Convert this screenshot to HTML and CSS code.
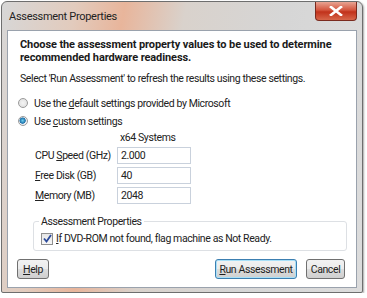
FILE: index.html
```html
<!DOCTYPE html>
<html lang="en">
<head>
    <meta charset="UTF-8">
    <meta name="viewport" content="width=device-width, initial-scale=1.0">
    <title>Assessment Properties</title>
    <link rel="stylesheet" href="styles.css">
</head>
<body>
    <div class="window">
        <div class="titlebar">
            <span class="title">Assessment Properties</span>
            <button class="close-btn">
                <svg width="14" height="10" viewBox="0 0 14 10">
                    <path d="M2 1 L12 9 M12 1 L2 9" stroke="#fff" stroke-width="2.6" stroke-linecap="square"/>
                </svg>
            </button>
        </div>
        <div class="client">
            <div class="heading">Choose the assessment property values to be used to determine recommended hardware readiness.</div>
            <div class="hint">Select 'Run Assessment' to refresh the results using these settings.</div>

            <!-- radio options -->
            <label class="option first"><span class="radio"></span><span>Use the <u>d</u>efault settings provided by Microsoft</span></label>
            <label class="option"><span class="radio checked"></span><span>Use <u>c</u>ustom settings</span></label>

            <div class="settings">
                <div class="col-head">x64 Systems</div>
                <div class="row"><span class="lbl">CPU <u>S</u>peed (GHz)</span><span class="field">2.000</span></div>
                <div class="row"><span class="lbl"><u>F</u>ree Disk (GB)</span><span class="field">40</span></div>
                <div class="row"><span class="lbl"><u>M</u>emory (MB)</span><span class="field">2048</span></div>
            </div>

            <div class="group">
                <div class="legend">Assessment Properties</div>
                <label class="check-row">
                    <span class="check">
                        <svg width="9" height="9" viewBox="0 0 9 9">
                            <path d="M1 4.5 L3.5 7.5 L8 1" fill="none" stroke="#2b4a9a" stroke-width="1.8"/>
                        </svg>
                    </span>
                    <span><u>I</u>f DVD-ROM not found, flag machine as Not Ready.</span>
                </label>
            </div>

            <div class="buttons">
                <button class="btn help"><u>H</u>elp</button>
                <span class="spacer"></span>
                <button class="btn run"><u>R</u>un Assessment</button>
                <button class="btn cancel">Cancel</button>
            </div>
        </div>
    </div>
</body>
</html>
```

FILE: styles.css
```css
body { margin: 0; background: #fff; font-family: Roboto, "Open Sans", sans-serif; font-size: 10.5px; letter-spacing: -0.4px; color: #222; }
u { text-decoration: underline; text-underline-offset: 1px; }

.window { width: 362px; height: 292px; margin: 1px 0 0 1px; border: 1px solid #6e6e6e; border-radius: 6px 6px 2px 2px; background: linear-gradient(100deg, #d7d7d7 0%, #e2cbbd 18%, #e8b59b 30%, #d9d2cc 45%, #d6d6d6 70%, #dcdcdc 100%); padding: 0 5px 4px 5px; box-sizing: border-box; box-shadow: 1px 1px 2px rgba(0,0,0,0.35); display: flex; flex-direction: column; }

.titlebar { height: 28px; flex: none; display: flex; align-items: flex-start; }
.title { margin: 8px 0 0 2px; font-size: 11px; letter-spacing: -0.3px; color: #222; }
.close-btn { margin: 0 0 0 auto; width: 42px; height: 19px; border: 1px solid #7a2a1e; border-top: none; border-radius: 0 0 4px 4px; background: linear-gradient(#e8a493 0%, #d4553e 45%, #c1321b 55%, #d7664a 100%); display: flex; align-items: center; justify-content: center; padding: 0; }

.client { flex: 1; background: #fff; border: 1px solid #9aa2ad; padding: 0 11px 0 12px; box-sizing: border-box; display: flex; flex-direction: column; }

.heading { font-weight: bold; font-size: 11px; line-height: 12.5px; margin-top: 8px; letter-spacing: -0.1px; color: #1a1a1a; }
.hint { margin-top: 8px; line-height: 14px; }

.option { display: flex; align-items: center; height: 18px; }
.option.first { margin-top: 8px; }
.radio { width: 10px; height: 10px; border-radius: 50%; border: 1px solid #9a9a9a; background: radial-gradient(circle, #f4f4f4 0%, #dcdcdc 100%); margin: 0 6px 0 -2px; box-sizing: border-box; }
.radio.checked { background: radial-gradient(circle at 45% 45%, #6fd0f0 0%, #1b6fa8 45%, #e9eef4 55%, #f4f4f4 100%); }

.settings { margin-left: 15px; }
.col-head { margin-left: 85px; line-height: 14px; margin-top: 1px; }
.row { display: flex; align-items: center; height: 20px; }
.row:first-of-type { margin-top: -1px; }
.lbl { width: 82px; }
.field { width: 74px; height: 17px; border: 1px solid #c9d1dc; box-sizing: border-box; padding-left: 3px; line-height: 15px; }

.group { margin: 16px 0 0 13px; width: 314px; height: 30px; flex: none; border: 1px solid #dde0e4; border-radius: 3px; position: relative; box-sizing: border-box; }
.legend { position: absolute; top: -7px; left: 5px; background: #fff; padding: 0 2px; line-height: 14px; }
.check-row { display: flex; align-items: center; margin: 10px 0 0 7px; }
.check { width: 12px; height: 12px; border: 1px solid #8f8f8f; box-sizing: border-box; background: linear-gradient(#e6e6e6, #f7f7f7); display: flex; align-items: center; justify-content: center; margin-right: 3px; }

.buttons { display: flex; align-items: center; margin-top: 8px; }
.spacer { flex: 1; }
.btn { font: inherit; letter-spacing: inherit; height: 20px; padding: 0; border: 1px solid #707070; border-radius: 3px; background: linear-gradient(#f2f2f2 0%, #ebebeb 50%, #dddddd 51%, #cfcfcf 100%); color: #1e1e1e; }
.btn.help { margin-left: -3px; width: 32px; }
.btn.run { width: 82px; border-color: #3c7fb1; box-shadow: inset 0 0 0 1px #a8e0f8; }
.btn.cancel { width: 39px; margin-left: 9px; }
```
